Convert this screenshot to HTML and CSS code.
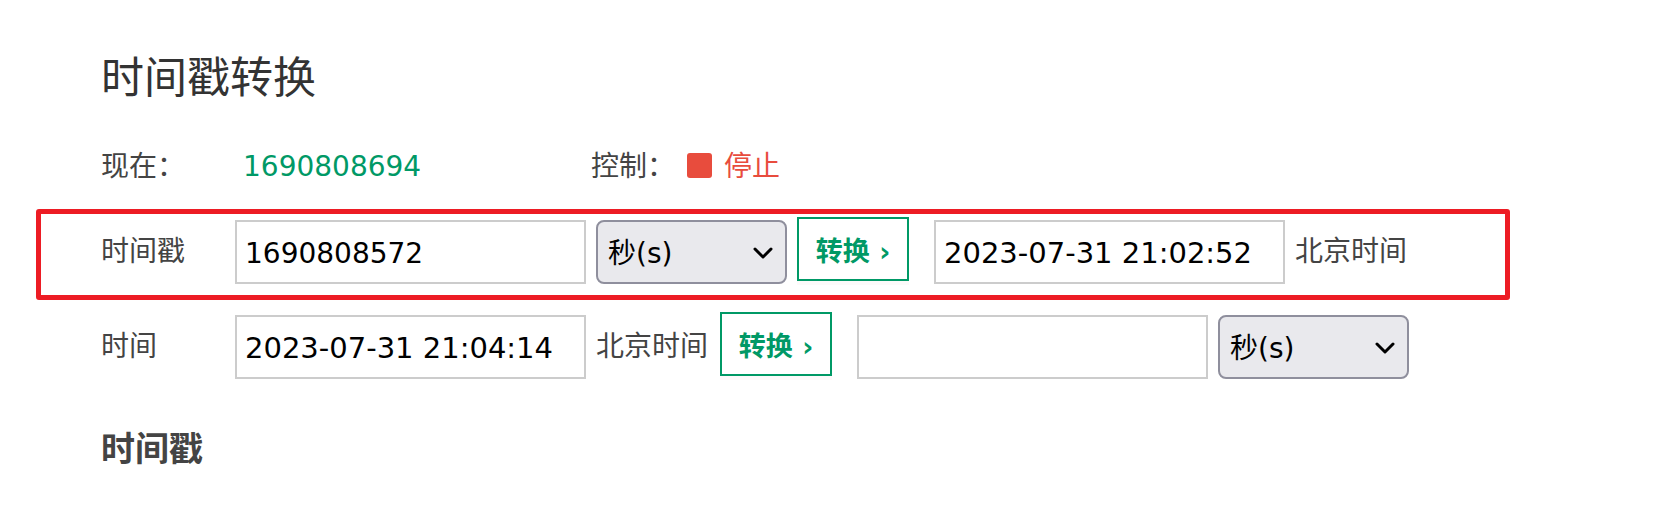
FILE: index.html
```html
<!DOCTYPE html>
<html lang="zh-CN">
<head>
<meta charset="utf-8">
<title>时间戳转换</title>
<link rel="stylesheet" href="styles.css">
</head>
<body>
<main class="page">
  <h1 class="title">时间戳转换</h1>

  <div class="row status">
    <span class="label">现在：</span>
    <span class="now">1690808694</span>
    <span class="control">控制：</span>
    <button class="stop" type="button"><span class="stop-icon"></span>停止</button>
  </div>

  <form class="row highlighted">
    <label class="label" for="stamp">时间戳</label>
    <div class="fields">
      <input class="box" id="stamp" type="text" value="1690808572">
      <div class="picker">
        <select class="unit" aria-label="时间戳单位"><option>秒(s)</option><option>毫秒(ms)</option></select>
        <svg class="chevron" viewBox="0 0 20 12"><path d="M2 2l8 8 8-8"/></svg>
      </div>
      <button class="convert" type="button">转换 ›</button>
      <input class="box date result" type="text" value="2023-07-31 21:02:52" aria-label="转换后的时间">
      <span class="zone">北京时间</span>
    </div>
  </form>

  <form class="row">
    <label class="label" for="time">时间</label>
    <div class="fields">
      <input class="box date" id="time" type="text" value="2023-07-31 21:04:14">
      <span class="zone">北京时间</span>
      <button class="convert" type="button">转换 ›</button>
      <input class="box result" type="text" aria-label="转换后的时间戳">
      <div class="picker">
        <select class="unit" aria-label="结果单位"><option>秒(s)</option><option>毫秒(ms)</option></select>
        <svg class="chevron" viewBox="0 0 20 12"><path d="M2 2l8 8 8-8"/></svg>
      </div>
    </div>
  </form>

  <h2 class="subtitle">时间戳</h2>
</main>
</body>
</html>
```

FILE: styles.css
```css
* {
  box-sizing: border-box;
}

body {
  margin: 0;
  background: #fff;
  color: #444;
  font-family: "DejaVu Sans", "Noto Sans CJK SC", sans-serif;
  font-size: 28px;
  line-height: 40px;
}

input,
select,
button {
  margin: 0;
  font-family: inherit;
}

.page {
  padding: 42px 147px 24px 36px;
}

.title {
  margin: 0 0 41px 65px;
  color: #333;
  font-family: "Noto Sans CJK SC", sans-serif;
  font-size: 43px;
  font-weight: 400;
  line-height: 64px;
}

.row {
  display: flex;
  align-items: center;
  padding-left: 65px;
}

.label {
  flex: none;
  width: 134px;
}

.status {
  margin-bottom: 22px;
}

.now {
  width: 356px;
  padding-left: 8px;
  color: #009966;
}

.control {
  width: 96px;
}

.stop {
  display: flex;
  align-items: center;
  gap: 12px;
  padding: 0;
  border: 0;
  background: none;
  color: #e84c3d;
  font-size: 28px;
  line-height: 40px;
}

.stop-icon {
  width: 25px;
  height: 25px;
  margin-bottom: 4px;
  border-radius: 3px;
  background: #e84c3d;
}

.highlighted {
  margin-bottom: 12px;
  padding: 3px 0 8px 60px;
  border: 5px solid #ed1c24;
  border-radius: 3px;
}

.fields {
  display: flex;
  align-items: center;
  gap: 10px;
}

.box {
  width: 351px;
  height: 64px;
  padding: 2px 8px 0;
  border: 2px solid #ccc;
  background: #fff;
  color: #000;
  font-size: 28px;
}

.date {
  font-size: 29px;
}

.result {
  margin-left: 15px;
}

.picker {
  position: relative;
}

.unit {
  display: block;
  width: 191px;
  height: 64px;
  padding: 2px 40px 0 10px;
  border: 2px solid #8f8f9d;
  border-radius: 8px;
  appearance: none;
  background: #e9e9ed;
  color: #000;
  font-size: 28px;
}

.chevron {
  position: absolute;
  top: 27px;
  right: 14px;
  width: 20px;
  height: 12px;
  fill: none;
  stroke: #000;
  stroke-width: 3;
  stroke-linecap: round;
  stroke-linejoin: round;
  pointer-events: none;
}

.convert {
  width: 112px;
  height: 64px;
  margin-bottom: 6px;
  padding: 0;
  border: 2px solid #009966;
  background: #fff;
  box-shadow: 0 4px 0 #fcfafa;
  color: #009966;
  font-size: 27px;
  font-weight: 700;
  white-space: nowrap;
}

.zone {
  min-width: 114px;
  white-space: nowrap;
}

.subtitle {
  margin: 41px 0 0 65px;
  font-family: "Noto Sans CJK SC", sans-serif;
  font-size: 34px;
  font-weight: 700;
  line-height: 48px;
}
```
